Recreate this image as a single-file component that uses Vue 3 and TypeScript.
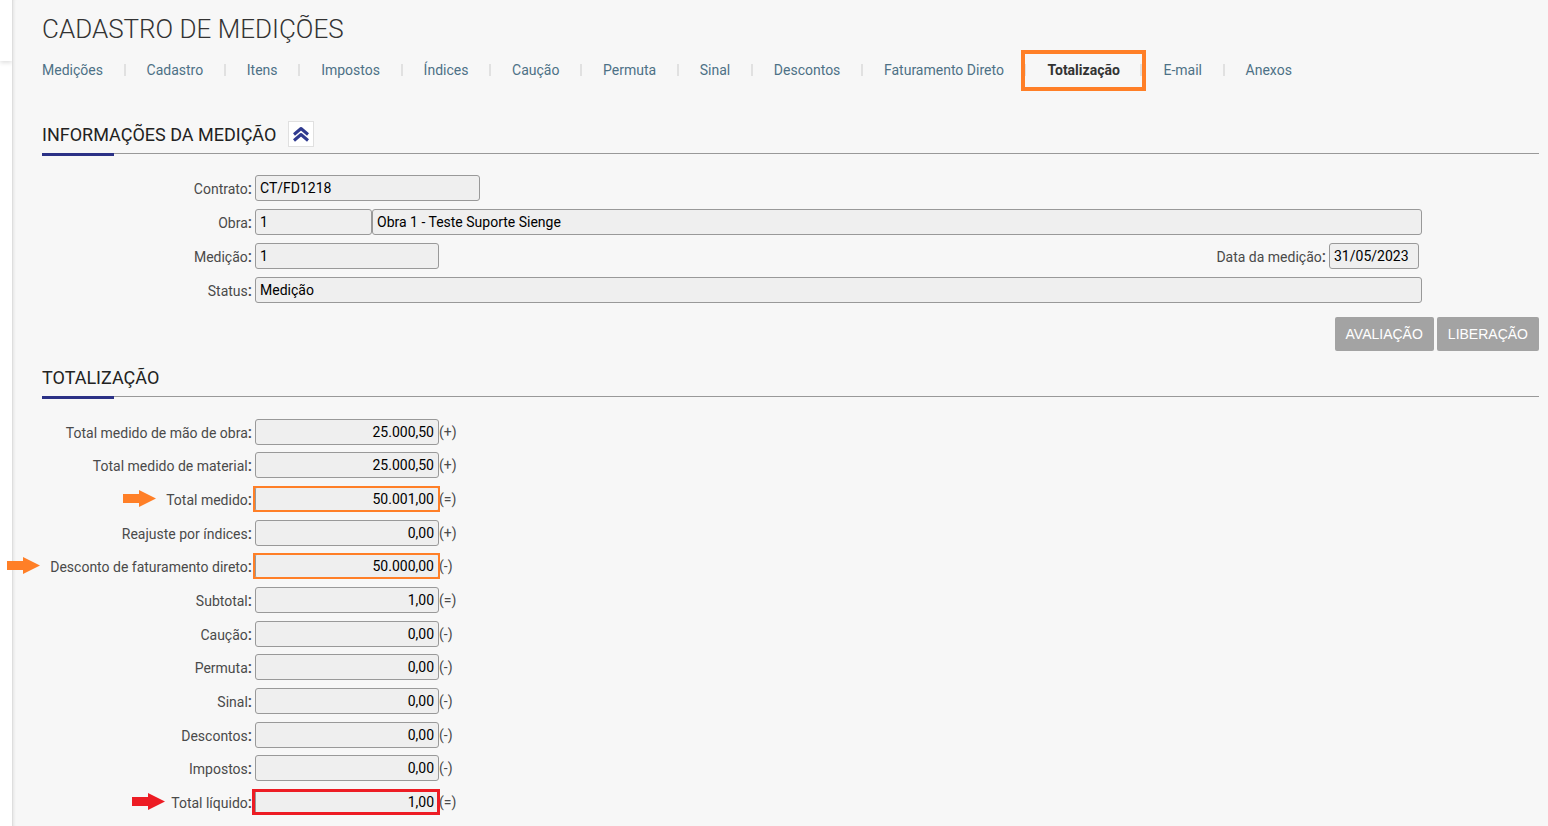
<script setup lang="ts">
import { ref } from 'vue'

type Mark = 'orange' | 'red'

interface Total {
  id: string
  label: string
  value: string
  sign: string
  mark?: Mark
}

const tabs: string[] = [
  'Medições', 'Cadastro', 'Itens', 'Impostos', 'Índices', 'Caução', 'Permuta',
  'Sinal', 'Descontos', 'Faturamento Direto', 'Totalização', 'E-mail', 'Anexos',
]
const current = ref('Totalização')
const open = ref(true)

const totals: Total[] = [
  { id: 'mao-de-obra', label: 'Total medido de mão de obra', value: '25.000,50', sign: '(+)' },
  { id: 'material', label: 'Total medido de material', value: '25.000,50', sign: '(+)' },
  { id: 'medido', label: 'Total medido', value: '50.001,00', sign: '(=)', mark: 'orange' },
  { id: 'reajuste', label: 'Reajuste por índices', value: '0,00', sign: '(+)' },
  { id: 'faturamento', label: 'Desconto de faturamento direto', value: '50.000,00', sign: '(-)', mark: 'orange' },
  { id: 'subtotal', label: 'Subtotal', value: '1,00', sign: '(=)' },
  { id: 'caucao', label: 'Caução', value: '0,00', sign: '(-)' },
  { id: 'permuta', label: 'Permuta', value: '0,00', sign: '(-)' },
  { id: 'sinal', label: 'Sinal', value: '0,00', sign: '(-)' },
  { id: 'descontos', label: 'Descontos', value: '0,00', sign: '(-)' },
  { id: 'impostos', label: 'Impostos', value: '0,00', sign: '(-)' },
  { id: 'liquido', label: 'Total líquido', value: '1,00', sign: '(=)', mark: 'red' },
]
</script>

<template>
  <div class="page">
    <aside class="rail"><div class="rail-top"></div></aside>
    <main class="content">
      <h1>CADASTRO DE MEDIÇÕES</h1>
      <nav class="tabs">
        <a
          v-for="tab in tabs"
          :key="tab"
          href="#"
          :class="{ active: tab === current }"
          @click.prevent="current = tab"
        >{{ tab }}</a>
      </nav>

      <section class="info">
        <header class="section-head">
          <h2>INFORMAÇÕES DA MEDIÇÃO</h2>
          <button class="toggle" type="button" aria-label="Recolher informações" @click="open = !open">
            <svg width="18" height="16" viewBox="0 0 18 16" fill="none" stroke="#2f3a8f" stroke-width="3" stroke-linejoin="round">
              <path d="M2 8.500 9 2.500l7 6M2 14.500 9 8.500l7 6" />
            </svg>
          </button>
        </header>
        <div v-if="open" class="fields">
          <div class="row">
            <label for="contrato">Contrato<b>:</b></label>
            <input id="contrato" class="w-contract" value="CT/FD1218" readonly />
          </div>
          <div class="row">
            <label for="obra">Obra<b>:</b></label>
            <input id="obra" class="w-code" value="1" readonly />
            <input class="grow" aria-label="Nome da obra" value="Obra 1 - Teste Suporte Sienge" readonly />
          </div>
          <div class="row">
            <label for="medicao">Medição<b>:</b></label>
            <input id="medicao" class="w-value" value="1" readonly />
            <label for="data" class="date-label">Data da medição<b>:</b></label>
            <input id="data" class="w-date" value="31/05/2023" readonly />
          </div>
          <div class="row">
            <label for="status">Status<b>:</b></label>
            <input id="status" class="grow" value="Medição" readonly />
          </div>
        </div>
        <div class="actions">
          <button type="button">AVALIAÇÃO</button>
          <button type="button">LIBERAÇÃO</button>
        </div>
      </section>

      <section class="totals">
        <header class="section-head">
          <h2>TOTALIZAÇÃO</h2>
        </header>
        <div class="total-list">
          <div v-for="t in totals" :key="t.id" class="row">
            <label :for="t.id">
              <span class="label-text">
                <svg v-if="t.mark" class="arrow" :class="t.mark" width="33" height="17" viewBox="0 0 33 17">
                  <path d="M0 4h16V0l17 8.500L16 17v-4H0z" fill="currentColor" />
                </svg>{{ t.label }}<b>:</b>
              </span>
            </label>
            <span class="box" :class="t.mark">
              <input :id="t.id" class="w-value amount" :value="t.value" readonly />
            </span>
            <span class="sign">{{ t.sign }}</span>
          </div>
        </div>
      </section>
    </main>
  </div>
</template>

<style>
body {
  margin: 0;
  background: #fff;
}
</style>

<style scoped>
* {
  box-sizing: border-box;
}

.page {
  display: flex;
  min-height: 100vh;
  font-family: Roboto, "Liberation Sans", sans-serif;
  font-size: 14px;
  color: #4a4a4a;
}

.rail {
  flex: 0 0 12px;
  background: #fff;
}

.rail-top {
  height: 61px;
  box-shadow: 0 2px 4px rgba(0, 0, 0, 0.12);
}

.content {
  flex: 1;
  min-width: 0;
  display: flex;
  flex-direction: column;
  padding: 13px 9px 7px 29px;
  background: #f7f7f7;
  border-left: 1px solid #dedede;
  box-shadow: inset 3px 0 3px -2px rgba(0, 0, 0, 0.08);
}

h1 {
  margin: 0;
  font-size: 26px;
  font-weight: 300;
  line-height: 32px;
  color: #333;
}

.tabs {
  display: flex;
  justify-content: space-between;
  max-width: 1250px;
  margin-top: 5px;
}

.tabs a {
  position: relative;
  padding: 12px 21px;
  line-height: 17px;
  color: #4d7186;
  text-decoration: none;
  white-space: nowrap;
}

.tabs a:first-child {
  padding-left: 0;
}

.tabs a:last-child {
  padding-right: 0;
}

.tabs a + a::before {
  content: "";
  position: absolute;
  left: -2px;
  top: 14px;
  width: 2px;
  height: 12px;
  background: #e1e1e1;
}

.tabs .active {
  font-weight: 700;
  color: #333;
}

.tabs .active::after {
  content: "";
  position: absolute;
  z-index: 1;
  inset: 0 -5px 0 -5px;
  border: 4px solid #ff7f27;
}

.section-head {
  position: relative;
  display: flex;
  align-items: center;
  gap: 12px;
  height: 37px;
  padding-bottom: 3px;
  border-bottom: 1px solid #999;
}

.section-head::after {
  content: "";
  position: absolute;
  left: 0;
  top: 36px;
  width: 72px;
  height: 3px;
  background: #2b3186;
}

h2 {
  margin: 0;
  padding-top: 2px;
  font-size: 18px;
  font-weight: 400;
  line-height: 24px;
  color: #222;
}

.info {
  margin-top: 26px;
}

.toggle {
  display: grid;
  place-items: center;
  width: 26px;
  height: 26px;
  padding: 0;
  background: #fff;
  border: 1px solid #e0e0e0;
}

.fields {
  display: grid;
  gap: 8px;
  margin: 21px 117px 0 0;
}

.row {
  display: flex;
  align-items: center;
}

label {
  flex: 0 0 210px;
  margin-right: 3px;
  padding-top: 2px;
  text-align: right;
  line-height: 16px;
  white-space: nowrap;
}

label b {
  font-size: 16px;
  font-weight: 500;
  line-height: 16px;
}

.date-label {
  flex: 1;
}

input {
  height: 26px;
  min-width: 0;
  padding: 0 4px;
  font-family: inherit;
  font-size: 14px;
  color: #000;
  background: #efefef;
  border: 1px solid #999;
  border-radius: 3px;
}

.w-contract {
  width: 225px;
}

.w-code {
  width: 117px;
}

.w-value {
  width: 184px;
}

.w-date {
  width: 90px;
  margin-right: 3px;
}

.grow {
  flex: 1;
}

.actions {
  display: flex;
  justify-content: flex-end;
  gap: 3px;
  margin-top: 14px;
}

.actions button {
  height: 34px;
  padding: 0 11px;
  font-family: "Liberation Sans", Arial, sans-serif;
  font-size: 14px;
  color: #fff;
  background: #a3a3a3;
  border: 0;
  border-radius: 2px;
}

.totals {
  flex: 1;
  display: flex;
  flex-direction: column;
  margin-top: 9px;
}

.total-list {
  flex: 1;
  display: grid;
  grid-auto-rows: 1fr;
  margin-top: 18px;
}

.label-text {
  position: relative;
}

.arrow {
  position: absolute;
  right: 100%;
  top: -2px;
  margin-right: 6px;
}

.arrow.orange {
  margin-right: 10px;
  color: #ff7f27;
}

.arrow.red {
  color: #ed1c24;
}

.box {
  position: relative;
  display: flex;
}

.box.orange::after,
.box.red::after {
  content: "";
  position: absolute;
  inset: 0 -1px 0 -2px;
  border: 2px solid #ff7f27;
}

.box.red::after {
  border: 3px solid #ed1c24;
  left: -3px;
}

.amount {
  text-align: right;
}

.sign {
  line-height: 16px;
}
</style>
